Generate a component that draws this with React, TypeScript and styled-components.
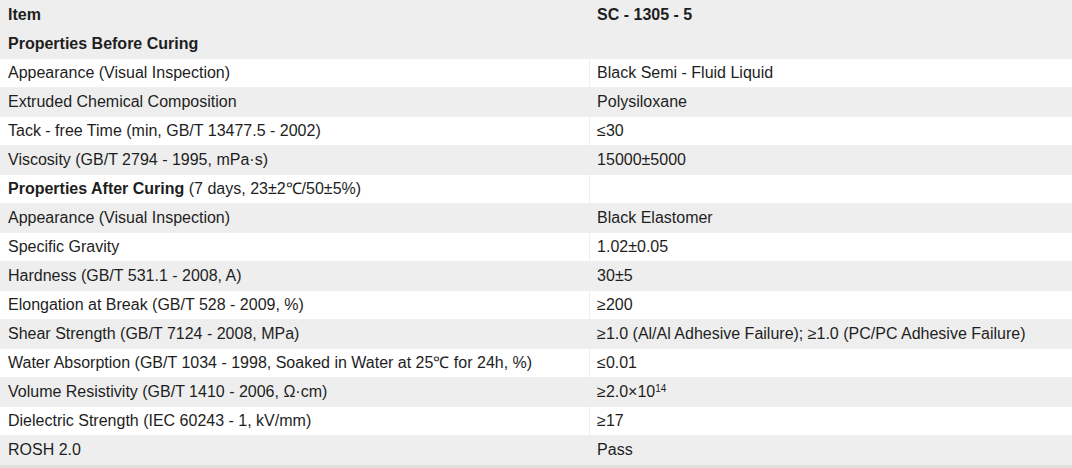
import React from "react";
import styled, { createGlobalStyle } from "styled-components";

const Global = createGlobalStyle`
  html, body { margin: 0; padding: 0; background: #e2e2dd; }
  body { font-family: "Liberation Sans", Arial, sans-serif; }
`;

const Table = styled.table`
  width: 100%;
  border-collapse: collapse;
  background: #ffffff;
  font-family: "Liberation Sans", Arial, sans-serif;
  font-size: 16px;
  color: #1e1e1e;
`;

const Row = styled.tr<{ $shade: boolean }>`
  background: ${(p) => (p.$shade ? "#eeeeee" : "#ffffff")};
`;

const Cell = styled.td<{ $bold?: boolean }>`
  height: 28px;
  padding: 0 7px;
  border: 1px solid #efefef;
  font-weight: ${(p) => (p.$bold ? 700 : 400)};
  white-space: nowrap;
  vertical-align: middle;
  line-height: 18px;
  &:first-child {
    width: 55%;
    border-left: none;
    padding-left: 8px;
  }
  &:last-child {
    border-right: none;
  }
`;

const Strong = styled.strong`
  font-weight: 700;
`;

const Sup = styled.sup`
  font-size: 10px;
  line-height: 0;
  vertical-align: 5px;
`;

type R = { k: React.ReactNode; v: React.ReactNode; bold?: boolean };

const rows: R[] = [
  { k: "Item", v: "SC - 1305 - 5", bold: true },
  { k: "Properties Before Curing", v: "", bold: true },
  { k: "Appearance (Visual Inspection)", v: "Black Semi - Fluid Liquid" },
  { k: "Extruded Chemical Composition", v: "Polysiloxane" },
  { k: "Tack - free Time (min, GB/T 13477.5 - 2002)", v: "≤30" },
  { k: "Viscosity (GB/T 2794 - 1995, mPa·s)", v: "15000±5000" },
  {
    k: (
      <>
        <Strong>Properties After Curing</Strong> (7 days, 23±2℃/50±5%)
      </>
    ),
    v: "",
  },
  { k: "Appearance (Visual Inspection)", v: "Black Elastomer" },
  { k: "Specific Gravity", v: "1.02±0.05" },
  { k: "Hardness (GB/T 531.1 - 2008, A)", v: "30±5" },
  { k: "Elongation at Break (GB/T 528 - 2009, %)", v: "≥200" },
  {
    k: "Shear Strength (GB/T 7124 - 2008, MPa)",
    v: "≥1.0 (Al/Al Adhesive Failure); ≥1.0 (PC/PC Adhesive Failure)",
  },
  {
    k: "Water Absorption (GB/T 1034 - 1998, Soaked in Water at 25℃ for 24h, %)",
    v: "≤0.01",
  },
  {
    k: "Volume Resistivity (GB/T 1410 - 2006, Ω·cm)",
    v: (
      <>
        ≥2.0×10<Sup>14</Sup>
      </>
    ),
  },
  { k: "Dielectric Strength (IEC 60243 - 1, kV/mm)", v: "≥17" },
  { k: "ROSH 2.0", v: "Pass" },
];

export default function App() {
  return (
    <>
      <Global />
      <Table>
        <tbody>
          {rows.map((r, i) => (
            <Row key={i} $shade={i === 0 || i % 2 === 1}>
              <Cell $bold={r.bold}>{r.k}</Cell>
              <Cell $bold={r.bold}>{r.v}</Cell>
            </Row>
          ))}
        </tbody>
      </Table>
    </>
  );
}
